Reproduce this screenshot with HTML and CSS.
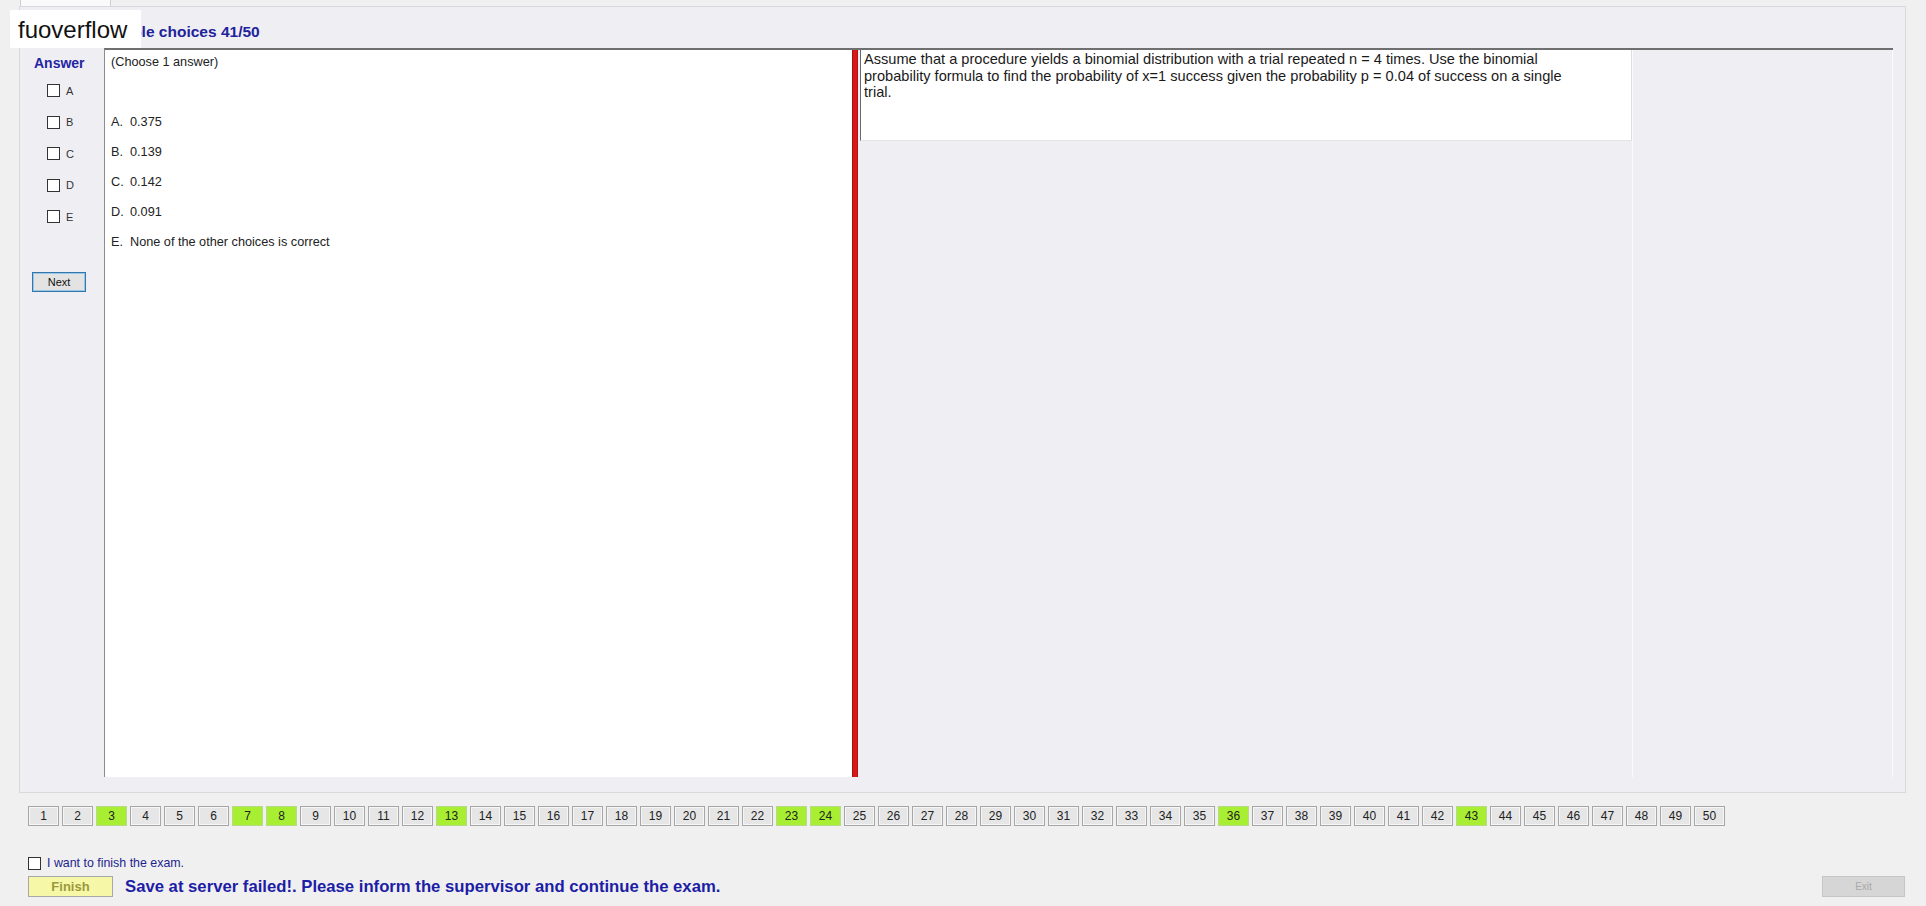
FILE: index.html
```html
<!DOCTYPE html>
<html lang="en">
<head>
  <meta charset="UTF-8">
  <title>Exam</title>
  <link rel="stylesheet" href="styles.css">
</head>
<body>
  <div class="tabs"><div class="tab"></div></div>

  <div class="brand">fuoverflow</div>

  <div class="exam">
    <div class="exam-head">Multiple choices 41/50</div>

    <div class="exam-body">
      <!-- Answer picker -->
      <div class="answer-col">
        <div class="answer-title">Answer</div>
        <div class="choices">
          <label class="choice"><input type="checkbox"> A</label>
          <label class="choice"><input type="checkbox"> B</label>
          <label class="choice"><input type="checkbox"> C</label>
          <label class="choice"><input type="checkbox"> D</label>
          <label class="choice"><input type="checkbox"> E</label>
        </div>
        <button class="next">Next</button>
      </div>

      <div class="frame">
        <div class="answers">
          <div class="hint">(Choose 1 answer)</div>
          <div class="options">
            <div class="option"><span class="key">A.</span>0.375</div>
            <div class="option"><span class="key">B.</span>0.139</div>
            <div class="option"><span class="key">C.</span>0.142</div>
            <div class="option"><span class="key">D.</span>0.091</div>
            <div class="option"><span class="key">E.</span>None of the other choices is correct</div>
          </div>
        </div>

        <div class="splitter"></div>

        <div class="question-side">
          <div class="question">
            <p>Assume that a procedure yields a binomial distribution with a trial repeated n = 4 times. Use the binomial probability formula to find the probability of x=1 success given the probability p = 0.04 of success on a single trial.</p>
          </div>
          <div class="side-panel"></div>
        </div>
      </div>
    </div>
  </div>

  <div class="footer">
    <div class="qnav">
      <button>1</button><button>2</button><button class="done">3</button><button>4</button><button>5</button>
      <button>6</button><button class="done">7</button><button class="done">8</button><button>9</button><button>10</button>
      <button>11</button><button>12</button><button class="done">13</button><button>14</button><button>15</button>
      <button>16</button><button>17</button><button>18</button><button>19</button><button>20</button>
      <button>21</button><button>22</button><button class="done">23</button><button class="done">24</button><button>25</button>
      <button>26</button><button>27</button><button>28</button><button>29</button><button>30</button>
      <button>31</button><button>32</button><button>33</button><button>34</button><button>35</button>
      <button class="done">36</button><button>37</button><button>38</button><button>39</button><button>40</button>
      <button>41</button><button>42</button><button class="done">43</button><button>44</button><button>45</button>
      <button>46</button><button>47</button><button>48</button><button>49</button><button>50</button>
    </div>

    <label class="finish-check"><input type="checkbox"> I want to finish the exam.</label>

    <div class="actions">
      <button class="finish">Finish</button>
      <span class="status">Save at server failed!. Please inform the supervisor and continue the exam.</span>
      <button class="exit" disabled>Exit</button>
    </div>
  </div>
</body>
</html>
```

FILE: styles.css
```css
* {
  box-sizing: border-box;
}

body {
  margin: 0;
  width: 1926px;
  height: 906px;
  overflow: hidden;
  position: relative;
  background: #f0f0f0;
  font-family: "Liberation Sans", Arial, sans-serif;
  color: #222;
}

button {
  font-family: "Liberation Sans", Arial, sans-serif;
  padding: 0;
  cursor: pointer;
}

input[type="checkbox"] {
  appearance: none;
  -webkit-appearance: none;
  width: 13px;
  height: 13px;
  margin: 0;
  border: 1px solid #333;
  background: #fff;
}

/* Tab strip on top */
.tabs {
  display: flex;
  height: 6px;
  padding-left: 20px;
}

.tabs .tab {
  width: 91px;
  height: 6px;
  background: #fafafa;
  border-left: 1px solid #cfcfcf;
  border-right: 1px solid #cfcfcf;
}

/* Watermark label over the header */
.brand {
  position: absolute;
  left: 10px;
  top: 10px;
  width: 131px;
  height: 38px;
  padding-left: 8px;
  background: #fff;
  color: #111;
  font-size: 24px;
  line-height: 40px;
  z-index: 10;
}

/* Exam window */
.exam {
  margin-left: 19px;
  width: 1887px;
  height: 787px;
  border: 1px solid #d8d8dd;
  background: #efeff3;
  display: flex;
  flex-direction: column;
}

.exam-head {
  height: 41px;
  padding: 16px 0 0 76px;
  font-size: 15.5px;
  font-weight: bold;
  line-height: 18px;
  color: #22229a;
}

.exam-body {
  display: flex;
  height: 729px;
}

/* Answer column */
.answer-col {
  width: 84px;
  padding-top: 7px;
  display: flex;
  flex-direction: column;
}

.answer-title {
  margin-left: 14px;
  font-size: 14px;
  font-weight: bold;
  line-height: 16px;
  color: #2424a4;
}

.choices {
  margin-top: 4px;
}

.choice {
  height: 31.5px;
  display: flex;
  align-items: center;
  gap: 6px;
  padding-left: 27px;
  font-size: 11px;
  color: #333;
}

.next {
  margin: 39px 0 0 12px;
  width: 54px;
  height: 20px;
  background: #e3e3e3;
  border: 1px solid #2f77ad;
  box-shadow: inset 0 0 0 1px #9cc6e6;
  font-size: 11px;
  color: #111;
}

/* Main frame: answers | splitter | question */
.frame {
  flex: 1;
  margin-right: 12px;
  display: flex;
  border-top: 2px solid #6f6f6f;
  border-left: 1px solid #8c8c8c;
}

.answers {
  width: 747px;
  background: #fff;
  padding: 5px 0 0 6px;
  font-size: 12.7px;
  color: #222;
}

.hint {
  line-height: 15px;
}

.options {
  margin-top: 37px;
}

.option {
  height: 30px;
  display: flex;
  align-items: center;
}

.option .key {
  width: 19px;
}

.splitter {
  width: 6px;
  background: #d81818;
  border-left: 1px solid #a31010;
  border-right: 1px solid #b01414;
}

.question-side {
  flex: 1;
  display: flex;
  align-items: flex-start;
  padding-left: 2px;
}

.question {
  width: 772px;
  height: 91px;
  background: #fff;
  border-left: 1px solid #6a6a6a;
  border-right: 1px solid #dedede;
  border-bottom: 1px solid #e2e2e2;
  padding: 1px 0 0 3px;
}

.question p {
  margin: 0;
  max-width: 722px;
  font-size: 14.6px;
  line-height: 16.5px;
  color: #1a1a1a;
}

.side-panel {
  flex: 1;
  align-self: stretch;
  border-left: 1px solid #fbfbfd;
  border-right: 1px solid #fbfbfd;
}

/* Bottom: question navigation and actions */
.footer {
  padding: 13px 21px 0 28px;
}

.qnav {
  display: flex;
  gap: 3px;
}

.qnav button {
  width: 31px;
  height: 20px;
  background: #e6e6e6;
  border: 1px solid #a6a6a6;
  box-shadow: inset 0 0 0 1px #f6f6f6;
  font-size: 12px;
  color: #222;
}

.qnav button.done {
  background: #a8ef34;
  border-color: #b8d88a;
  box-shadow: none;
}

.finish-check {
  margin-top: 30px;
  height: 14px;
  display: flex;
  align-items: center;
  gap: 6px;
  font-size: 12.4px;
  color: #1f1f8f;
}

.actions {
  margin-top: 6px;
  display: flex;
  align-items: center;
}

.finish {
  width: 85px;
  height: 21px;
  background: #f6f8a8;
  border: 1px solid #a8a8a8;
  font-size: 13px;
  font-weight: bold;
  color: #9a9a3c;
}

.status {
  margin-left: 12px;
  font-size: 16.7px;
  font-weight: bold;
  color: #1d1da6;
}

.exit {
  margin-left: auto;
  width: 83px;
  height: 21px;
  background: #d6d6d6;
  border: 1px solid #c6c6c6;
  font-size: 10px;
  color: #a8a8a8;
  cursor: default;
}
```
